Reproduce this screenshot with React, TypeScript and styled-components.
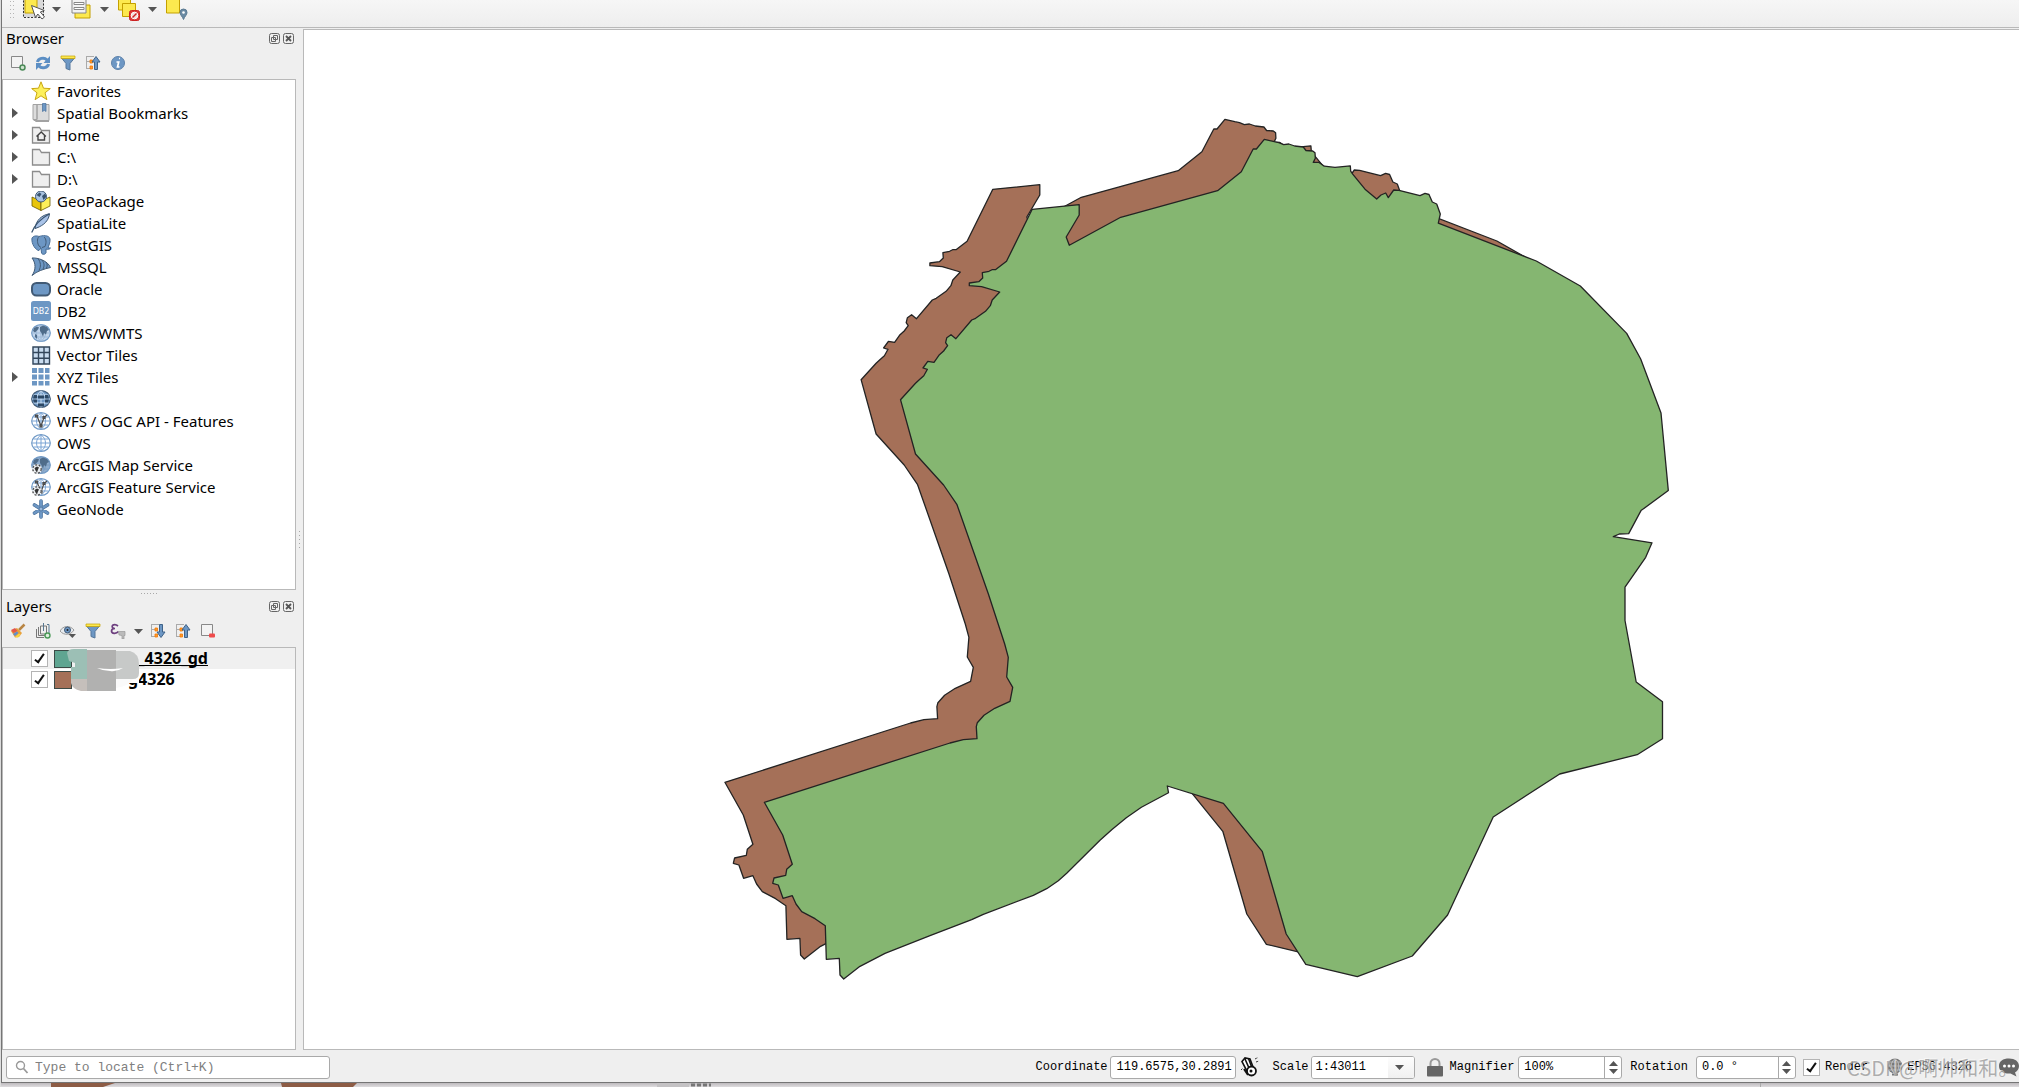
import React from "react";
import styled, { createGlobalStyle, css } from "styled-components";

const UI = `"Noto Sans", "Open Sans", sans-serif`;
const MONO = `"Liberation Mono", "Noto Sans CJK SC", monospace`;
const LINE = "#b9b9b9";
const STEEL = "#6d97c4";
const NAVY = "#415a75";

const Global = createGlobalStyle`
  *, *::before, *::after { box-sizing: border-box; }
  body { margin: 0; background: #dcdcdc; overflow: hidden; }
  ul { list-style: none; margin: 0; padding: 0; }
  svg { display: block; flex: none; }
`;

const Desktop = styled.div`
  display: flex;
  flex-direction: column;
  height: 100vh;
  padding-left: 1px;
  font-family: ${UI};
  font-size: 15px;
  color: #000;
`;

const Window = styled.div`
  flex: 1;
  min-height: 0;
  display: flex;
  flex-direction: column;
  background: #efefef;
  border-left: 1px solid #757575;
  border-bottom: 1px solid #757575;
`;

const IconButton = styled.button`
  display: flex;
  align-items: center;
  justify-content: center;
  padding: 0;
  border: 0;
  background: none;
`;

const ToolBar = styled.header`
  display: flex;
  align-items: flex-end;
  height: 28px;
  padding: 0 0 6px 6px;
  overflow: hidden;
  background: linear-gradient(#f6f6f6, #eeeeee);
  border-bottom: 1px solid ${LINE};
`;

const ToolButton = styled(IconButton)<{ $w: number }>`
  width: ${(p) => p.$w}px;
  height: 24px;
  flex: none;
`;

const Body = styled.div`
  flex: 1;
  min-height: 0;
  display: flex;
`;

const DockColumn = styled.aside`
  width: 294px;
  flex: none;
  display: flex;
  flex-direction: column;
`;

const Dock = styled.section<{ $share: number }>`
  flex: ${(p) => p.$share} 1 0;
  min-height: 0;
  display: flex;
  flex-direction: column;
`;

const DockTitle = styled.div`
  display: flex;
  align-items: center;
  gap: 3px;
  height: 23px;
  flex: none;
  padding: 0 2px 2px 4px;

  h2 {
    flex: 1;
    margin: 0;
    font-size: 15px;
    font-weight: 400;
    line-height: 23px;
  }
`;

const DockTools = styled.div`
  display: flex;
  align-items: center;
  gap: 9px;
  height: 24px;
  flex: none;
  margin-bottom: 4px;
  padding-left: 8px;
`;

const DockTool = styled(IconButton)<{ $narrow?: boolean }>`
  width: ${(p) => (p.$narrow ? 6 : 16)}px;
  height: 16px;
`;

const ListBox = styled.div`
  position: relative;
  flex: 1;
  min-height: 0;
  background: #fff;
  border: 1px solid ${LINE};
  overflow: hidden;
`;

const Splitter = styled.div<{ $upright?: boolean }>`
  flex: none;
  display: flex;
  align-items: center;
  justify-content: center;
  ${(p) => (p.$upright ? css`width: 7px;` : css`height: 6px;`)}

  &::after {
    content: "";
    ${(p) =>
      p.$upright
        ? css`width: 1px; height: 17px; background: repeating-linear-gradient(#a8a8a8 0 1px, transparent 1px 4px);`
        : css`width: 17px; height: 1px; background: repeating-linear-gradient(90deg, #a8a8a8 0 1px, transparent 1px 3px);`}
  }
`;

const TreeRow = styled.li`
  display: flex;
  align-items: center;
  height: 22px;
  padding-left: 8px;
  line-height: 22px;
  white-space: nowrap;
`;

const Expander = styled(IconButton)`
  width: 8px;
  height: 16px;
  margin-right: 12px;
`;

const TreeText = styled.span`
  margin-left: 6px;
`;

const LayerRow = styled.li<{ $current?: boolean }>`
  display: flex;
  align-items: center;
  gap: 6px;
  height: 21px;
  padding-left: 28px;
  background: ${(p) => (p.$current ? "#f0f0f0" : "#fff")};
`;

const Check = styled.input`
  appearance: none;
  display: block;
  position: relative;
  flex: none;
  width: 17px;
  height: 17px;
  margin: 0;
  background: #fff;
  border: 1px solid #b4b4b4;

  &:checked::after {
    content: "";
    position: absolute;
    left: 5px;
    top: 1px;
    width: 5px;
    height: 11px;
    border: solid #111;
    border-width: 0 2px 2px 0;
    transform: rotate(35deg);
  }
`;

const Swatch = styled.span<{ $color: string }>`
  width: 18px;
  height: 18px;
  flex: none;
  background: ${(p) => p.$color};
  border: 1px solid #3c4a46;
`;

const LayerName = styled.label<{ $skip: number; $current?: boolean }>`
  margin-left: ${(p) => p.$skip}px;
  font-size: 16px;
  font-weight: 700;
  line-height: 21px;
  text-decoration: ${(p) => (p.$current ? "underline" : "none")};
  text-decoration-thickness: 1px;
  text-decoration-skip-ink: none;
`;

const Smudge = styled.svg`
  position: absolute;
  left: 63px;
  top: 1px;
`;

const MapCanvas = styled.main`
  flex: 1;
  min-width: 0;
  margin-top: 1px;
  background: #fff;
  border: solid ${LINE};
  border-width: 1px 0 1px 1px;
  overflow: hidden;
`;

const StatusBar = styled.footer`
  position: relative;
  display: flex;
  align-items: center;
  height: 32px;
  flex: none;
  padding: 2px 0 0 4px;
  font-family: ${MONO};
  font-size: 12px;
`;

const field = css`
  height: 23px;
  background: #fff;
  border: 1px solid #a9a9a9;
  border-radius: 3px;
`;

const Locator = styled.label`
  ${field}
  display: flex;
  align-items: center;
  gap: 6px;
  width: 324px;
  padding-left: 8px;
  margin-right: auto;

  input {
    flex: 1;
    min-width: 0;
    padding: 0;
    border: 0;
    outline: 0;
    background: none;
    font: 13px ${MONO};
  }
  input::placeholder { color: #808080; opacity: 1; }
`;

const Label = styled.label<{ $before?: number; $after?: number }>`
  margin-left: ${(p) => p.$before ?? 0}px;
  margin-right: ${(p) => p.$after ?? 4}px;
  white-space: nowrap;
`;

const TextBox = styled.input`
  ${field}
  width: 126px;
  padding: 0 0 0 6px;
  font: 12px ${MONO};
`;

const Combo = styled.span`
  ${field}
  position: relative;
  display: flex;
  width: 104px;
  overflow: hidden;

  select {
    appearance: none;
    width: 100%;
    padding: 0 0 0 4px;
    border: 0;
    background: linear-gradient(#fdfdfd, #f0f0f0) right / 26px 100% no-repeat #fff;
    font: 12px ${MONO};
    color: #000;
  }
  svg { position: absolute; right: 10px; top: 8px; pointer-events: none; }
`;

const Spin = styled.span<{ $w: number }>`
  ${field}
  display: flex;
  width: ${(p) => p.$w}px;

  input {
    flex: 1;
    min-width: 0;
    padding: 0 0 0 5px;
    border: 0;
    background: none;
    font: 12px ${MONO};
  }
`;

const SpinKeys = styled.span`
  display: flex;
  flex-direction: column;
  justify-content: center;
  align-items: center;
  gap: 3px;
  width: 17px;
  border-left: 1px solid #a9a9a9;
`;

const StatusButton = styled(IconButton)<{ $before: number; $after: number }>`
  gap: 4px;
  margin-left: ${(p) => p.$before}px;
  margin-right: ${(p) => p.$after}px;
  font: 12px ${MONO};
  color: #000;
`;

const Watermark = styled.span`
  position: absolute;
  right: 0;
  top: 4px;
  width: 172px;
  font: 20px/28px "Noto Sans CJK SC", sans-serif;
  color: rgba(150, 150, 150, 0.75);
  text-shadow: -1px -1px 0 rgba(255, 255, 255, 0.6);
  white-space: nowrap;
  pointer-events: none;
`;

const Beneath = styled.div`
  height: 4px;
  flex: none;
  background: linear-gradient(#bdbabd, #dedcde);
`;

/* ---------- icons ---------- */

const Svg = ({ w, h = w, children }: { w: number; h?: number; children: React.ReactNode }) => (
  <svg width={w} height={h} viewBox={`0 0 ${w} ${h}`} fill="none" aria-hidden="true">
    {children}
  </svg>
);

const Down = () => (
  <svg width={9} height={5} viewBox="0 0 9 5" aria-hidden="true"><path d="M0 0h9L4.500 5z" fill="#555" /></svg>
);
const Up = () => (
  <svg width={9} height={5} viewBox="0 0 9 5" aria-hidden="true"><path d="M0 5h9L4.500 0z" fill="#555" /></svg>
);

const Grip = () => (
  <Svg w={8} h={24}>
    <path d="M2.500 0v21M5.500 0v21" stroke="#b5b5b5" strokeDasharray="1 3" />
  </Svg>
);

const SelectIcon = () => (
  <Svg w={24}>
    <rect x="1" y="0" width="21" height="20" fill="#d9d9d9" />
    <path d="M1.500 0v20.500h20V0" stroke="#333" strokeDasharray="2 1.500" />
    <path d="M3 0h12v16H3z" fill="#fce94f" stroke="#c4a000" />
    <path d="M9.500 8.500l4 12 2.300-3.500 4.200 5 2.500-2-4.200-5 4-1.500z" fill="#fff" stroke="#555" />
  </Svg>
);
const FormIcon = () => (
  <Svg w={24}>
    <path d="M6 8h15v13H6z" fill="#fce94f" stroke="#c4a000" />
    <path d="M3 0h14v16H3z" fill="#f2f2f2" stroke="#888" />
    <path d="M5 5.500h10v2H5zM5 10.500h10v2H5z" fill="#fff" stroke="#888" />
  </Svg>
);
const DeselectIcon = () => (
  <Svg w={24}>
    <path d="M1.500 0h12v13h-12z" fill="#fce94f" stroke="#c4a000" />
    <path d="M5.500 6.500h13v13h-13z" fill="#fce94f" stroke="#c4a000" />
    <rect x="12.500" y="13.500" width="10" height="10" rx="2" fill="#dd3a3a" stroke="#c22" />
    <circle cx="17.500" cy="18.500" r="3.300" fill="#f2dede" stroke="#fff" />
    <path d="M15.500 20.500l4-4" stroke="#c22" strokeWidth="1.500" />
  </Svg>
);
const PinSelectIcon = () => (
  <Svg w={24}>
    <path d="M1.500 0h13v16h-13z" fill="#fce94f" stroke="#c4a000" />
    <path d="M18.500 22.500c-1-3-3.500-4.500-3.500-7a3.500 3.500 0 017 0c0 2.500-2.500 4-3.500 7z" fill="#6b8ba4" stroke="#587891" />
    <circle cx="18.500" cy="15.500" r="1.300" fill="#fff" />
  </Svg>
);

const FloatIcon = () => (
  <Svg w={11}>
    <rect x=".5" y=".5" width="10" height="10" rx="2" stroke="#666" />
    <path d="M4.500 2.500h4v4h-4zM2.500 4.500h4v4h-4z" stroke="#666" />
  </Svg>
);
const CloseIcon = () => (
  <Svg w={11}>
    <rect x=".5" y=".5" width="10" height="10" rx="2" stroke="#666" />
    <path d="M3 3l5 5M8 3L3 8" stroke="#555" strokeWidth="1.800" />
  </Svg>
);

const AddIcon = () => (
  <Svg w={16}>
    <path d="M1.500 1.500h11v11h-11z" stroke="#888" fill="#f3f3f3" />
    <circle cx="12.500" cy="12.500" r="2.500" fill="#cfe3cf" stroke="#4b8a58" strokeWidth="1.500" />
  </Svg>
);
const RefreshIcon = () => (
  <Svg w={16}>
    <path d="M2.500 7C3 3.500 9 1.500 12 5M13.500 9C13 12.500 7 14.500 4 11" stroke="#5b8ec4" strokeWidth="3" />
    <path d="M15 1v7H8.500zM1 15V8h6.500z" fill="#5b8ec4" />
  </Svg>
);
const FilterIcon = () => (
  <Svg w={16}>
    <path d="M1.500 3h13L10 8.500V15l-4-1.500v-5z" fill={STEEL} stroke="#55779b" />
    <path d="M1 1h14v2.500H1z" fill="#fce94f" stroke="#c4a000" strokeWidth=".7" />
  </Svg>
);
const LevelIcon = ({ down }: { down?: boolean }) => (
  <Svg w={16}>
    <path d="M1 1.500h8M1.500 1v13M1.500 6.500h4M1.500 13.500h4" stroke="#aaa" />
    <path d="M5 5h2.500v3H5zM5 11h2.500v3H5z" fill="#ff9a2e" stroke="#f57900" strokeWidth=".8" />
    <path
      d={down ? "M9.500 1.500h3V9H15L11 14.500 7 9H9.500z" : "M9.500 14.500h3V7H15L11 1.500 7 7H9.500z"}
      fill={STEEL}
      stroke="#3f6288"
    />
  </Svg>
);
const InfoIcon = () => (
  <Svg w={16}>
    <circle cx="8" cy="8" r="6.500" fill={STEEL} stroke="#5d82ab" />
    <path d="M9 3.500h1M6.500 7h2.200l-1.200 5h2" stroke="#fff" strokeWidth="1.700" />
  </Svg>
);
const BrushIcon = () => (
  <Svg w={16}>
    <path d="M14.500 1.500L9 7" stroke="#b98644" strokeWidth="2.500" />
    <path d="M1 8l6-3 5 5-3 4-4 .5z" fill="#e9a13b" />
    <path d="M1 7l4-2 2.500 3-4 2z" fill="#e2574c" />
    <path d="M3 11l4-2.500 1.500 1.500L5 13z" fill="#5d8ed0" />
    <path d="M5 14l4-3.500 1.500 1-2.500 3z" fill="#f6d743" />
  </Svg>
);
const GroupIcon = () => (
  <Svg w={16}>
    <path d="M1.500 6v8.500H9M3.500 4v8.500H11M5.500 3h6v8h-6z" stroke="#777" fill="#eee" />
    <path d="M8.500 0v8M12 1.500h2v9" stroke="#587891" />
    <circle cx="12.500" cy="12.500" r="2.500" fill="#dff0df" stroke="#4b9a58" strokeWidth="1.400" />
  </Svg>
);
const EyeIcon = () => (
  <Svg w={16}>
    <path d="M0 8c3-5.500 10-6 14-1-3 5-10 6-14 1z" fill="#e6eaee" stroke="#999" />
    <circle cx="7.500" cy="7" r="3" fill={STEEL} stroke={NAVY} />
    <circle cx="7.500" cy="7" r="1" fill="#222" />
    <path d="M8.500 11h7.500l-3.700 4z" fill="#555" />
  </Svg>
);
const ExpressionIcon = () => (
  <Svg w={16}>
    <path d="M8 3C5 .5 1 2 2.500 4.500 3 5.500 5 5.500 5 5.500S1.500 5.500 1.500 8c0 3 5 3 7 .5" stroke="#6d3f7f" strokeWidth="1.700" />
    <path d="M8.500 8.500h6.500v4h-1V16h-2v-3.500L9 12z" fill="#bbb" stroke="#999" strokeWidth=".7" />
  </Svg>
);
const RemoveIcon = () => (
  <Svg w={16}>
    <path d="M1.500 1.500h11v11h-11z" stroke="#888" fill="#f3f3f3" />
    <rect x="9" y="10.500" width="6" height="4" rx="1" fill="#ef4b4b" />
  </Svg>
);

/* Tree icons share a 20px box */
const Globe = ({ face = "#fff", line = "#7ba4d4", rim = STEEL, children }: any) => (
  <>
    <ellipse cx="10" cy="10" rx="9.300" ry="8.400" fill={face} stroke={rim} strokeWidth="1.200" />
    <path d="M10 2v16M1 10h18M2.500 6h15M2.500 14h15M10 1.800c-6 4-6 12.500 0 16.500M10 1.800c6 4 6 12.500 0 16.500" stroke={line} />
    {children}
  </>
);
const Continents = () => (
  <path
    d="M3 5l3-1.500 2 1L6.500 7 4 9.500 2 8zM9 4l3-1.500 4 1.500 2 3-2 1-1 3.500-2-1.500-1 4-1.500-4L9 8zM4 11l2 1v4L4 14z"
    fill="#4f6c8a"
  />
);
const Nodes = () => (
  <g stroke="#4a4a4a" strokeWidth="1.200">
    <path d="M6 5l4 10 3-8.500M13 6.500l3-2.500" />
    <path d="M4.500 4h2v2h-2zM9 14h2v2H9zM12 5.500h2v2h-2z" fill="#666" />
  </g>
);
const Badge = () => (
  <g>
    <circle cx="6" cy="14" r="4.800" fill="#fff" />
    <circle cx="6" cy="14" r="4.200" fill="#eceff2" stroke="#444" strokeDasharray="2 1.500" strokeWidth="1.200" />
    <path d="M3.500 13l2.500-1.500 2 1-1 2-1 3-1.500-2z" fill="#333" />
  </g>
);
const Folder = () => <path d="M1.500 2.500h7l2 3h8v12.500h-17z" fill="#efefef" stroke="#8c8c8c" strokeWidth="1.300" />;

const TREE_ART: Record<string, React.ReactNode> = {
  star: <path d="M10 .8l2.500 6.400 6.800.4-5.300 4.200 1.900 6.900L10 14.800l-5.900 3.900L6 11.800.7 7.600l6.800-.4z" fill="#fdf05a" stroke="#c9a611" />,
  book: (
    <>
      <path d="M2 1.500h4v15H2zM6 1.500h12v16H4l2-1z" fill="#dcdcdc" stroke="#a2a2a2" />
      <path d="M2 16.500l3 2h13" stroke="#a2a2a2" />
      <path d="M11.500.5h3.500v8l-1.700-1.200-1.800 1.200z" fill={STEEL} stroke="#466f9b" strokeWidth=".7" />
    </>
  ),
  home: (
    <>
      <Folder />
      <path d="M5.500 11.500l4.700-4.500 4.700 4.500M7 10.500V15h6.500v-4.500" stroke="#444" strokeWidth="1.400" />
    </>
  ),
  folder: <Folder />,
  package: (
    <>
      <path d="M1 6l9 4v9.500L1 15z" fill="#e8c50c" stroke="#6b5a00" strokeWidth=".8" />
      <path d="M19 6l-9 4v9.500l9-4.500z" fill="#fdf05a" stroke="#6b5a00" strokeWidth=".8" />
      <circle cx="10" cy="5.500" r="5.500" fill="#a9c3e0" stroke={NAVY} />
      <path d="M5.500 4l3-2.500 2 1.500-2 3zM11 5l3-2.500 1.500 3-3 3.500z" fill="#38536f" />
    </>
  ),
  feather: (
    <>
      <path d="M18.500.8C11 2 5 7 4 15.500 9 14 17.500 10 18.500.8z" fill="#a9c3e8" stroke="#38536f" />
      <path d="M18.500.8C11 5 4 11 .7 19.500" stroke="#38536f" strokeWidth="1.200" />
    </>
  ),
  elephant: (
    <>
      <path d="M1 3c2-3 6-2 7-1.500C11 .5 18-.5 19 4c.5 3-1.500 7-2 9h2.500c-1 1.500-3 1.500-4.500 1V18c-1.500 2-4 1.500-4.500 0l-.5-5-2 2.500C5 15.500 0 9 1 3z" fill={STEEL} stroke="#466b94" />
      <path d="M8 1.500C5.500 4 6.500 9 8 11l2 1.500M13 2c2.500 2 2.500 6 1 9.500l-3 1" stroke={NAVY} />
    </>
  ),
  fin: (
    <>
      <path d="M1 1c6-.5 16 3 18.500 9.500C13 12 6 14 1 18.500 5 13 5 6 1 1z" fill={STEEL} stroke={NAVY} />
      <path d="M7 1.500c3 4 3 8 1 12M11 3c2.500 3.500 2.500 6 1 9M15 5c1.500 2 1.500 4 .5 6" stroke={NAVY} />
    </>
  ),
  oracle: <rect x="1" y="4" width="18" height="12.500" rx="4.500" fill={STEEL} stroke="#415a75" strokeWidth="2" />,
  db2: <rect width="20" height="20" rx="2.500" fill={STEEL} />,
  wms: <Globe face="#c3d6ec" line="#9db9d8"><Continents /></Globe>,
  grid: (
    <>
      <path d="M1.500 2h17v17h-17z" fill="#c9dcf0" />
      <path d="M2 2h16.500v17H2zM2 7.500h16.500M2 13.300h16.500M7.500 2v17M13 2v17" stroke="#33475c" strokeWidth="1.400" />
    </>
  ),
  dots: (
    <path
      d="M1 1h5v5H1zM7.500 1h5v5h-5zM14 1h4.500v5H14zM1 7.500h5v5H1zM7.500 7.500h5v5h-5zM14 7.500h4.500v5H14zM1 14h5v4.500H1zM7.500 14h5v4.500h-5zM14 14h4.500v4.500H14z"
      fill={STEEL}
    />
  ),
  wcs: (
    <Globe face={STEEL} line="#c9dcf0" rim={NAVY}>
      <path d="M7 6.500h6v3H7zM2 10.500h4v3H3zM14 10.500h4l-1 3h-3zM7 14.500h6v3H7zM3 6h3v3.500H2zM14 6h3l1 3.500h-4z" fill="#2c4763" />
    </Globe>
  ),
  wfs: <Globe><Nodes /></Globe>,
  ows: <Globe />,
  agsMap: <Globe face="#8fadce" line="#7b9cc0"><Continents /><Badge /></Globe>,
  agsFeature: <Globe><Nodes /><Badge /></Globe>,
  geonode: (
    <>
      <path d="M10 2v16M3.500 6l13 8M16.500 6l-13 8" stroke="#466b94" strokeWidth="3.600" strokeLinecap="round" />
      <path d="M10 2v16M3.500 6l13 8M16.500 6l-13 8" stroke={STEEL} strokeWidth="2.600" strokeLinecap="round" />
      <circle cx="10" cy="10" r="2" fill="#9dbbdc" stroke="#466b94" strokeWidth=".8" />
    </>
  ),
};

const TreeIcon = ({ name }: { name: string }) => (
  <Svg w={20}>
    {TREE_ART[name]}
    {name === "db2" && (
      <text x="10" y="12.500" textAnchor="middle" fontFamily="DejaVu Sans, sans-serif" fontSize="8" fill="#fff">DB2</text>
    )}
  </Svg>
);

const MouseIcon = () => (
  <Svg w={20}>
    <path d="M15 2l3-1.500M16 5l3-1M1 13l2-2" stroke="#333" strokeDasharray="2 1" />
    <path d="M2 4.500L5 1l5 1 3 8-6 4z" fill="#fff" stroke="#111" strokeWidth="1.600" />
    <path d="M5 2l4 9M8.500 1.500l3 8" stroke="#111" strokeWidth="1.600" />
    <circle cx="11.500" cy="14" r="4.500" fill="#fff" stroke="#111" strokeWidth="1.800" />
    <circle cx="11" cy="14" r="1.500" fill="#111" />
    <path d="M4 12l4 6" stroke="#111" strokeWidth="2" />
  </Svg>
);
const LockIcon = () => (
  <Svg w={16} h={20}>
    <path d="M3.500 10V6.500a4.500 4.500 0 019 0V10" stroke="#999" strokeWidth="2" />
    <rect x="0" y="9" width="16" height="10.500" rx="1" fill="#666" />
  </Svg>
);
const CrsIcon = () => (
  <Svg w={16} h={18}>
    <circle cx="8" cy="8" r="7.500" fill="#777" />
    <path d="M8 0v16M.5 8h15M2 4h12M2 12h12M8 .5c-5 4-5 11 0 15M8 .5c5 4 5 11 0 15" stroke="#ccc" strokeWidth=".8" />
    <path d="M5 16.500h6" stroke="#777" strokeWidth="2" />
  </Svg>
);
const ChatIcon = () => (
  <Svg w={20}>
    <path d="M10 1.500c6 0 10 3 10 7.500 0 3-1.500 5-4 6.500l1.500 4-6-3C4.500 17 0 14 0 9s4-7.500 10-7.500z" fill="#666" />
    <circle cx="5.500" cy="9" r="1.500" fill="#fff" /><circle cx="10" cy="9" r="1.500" fill="#fff" /><circle cx="14.500" cy="9" r="1.500" fill="#fff" />
  </Svg>
);
const LensIcon = () => (
  <Svg w={14}>
    <circle cx="5.500" cy="5.500" r="4" stroke="#999" strokeWidth="1.400" />
    <path d="M8.500 8.500l4 4.500" stroke="#999" strokeWidth="1.800" />
  </Svg>
);

/* ---------- map ---------- */

const PARCEL =
  "900.5,399.7 915.5,454 943.6,485 957,504.7 988.3,593.7 1004.7,644 1008.3,657.3 1006.7,677 1012.7,687.3 1010,701.3 994.7,708.3 984,715.3 977.3,722.7 976.3,726.7 977,738.7 963.3,739.7 950,743 764.3,802.3 782.7,835 792.3,864.3 786.7,869.3 785.7,875.3 774,878 772.7,883.3 778.3,885 783,898.3 792.3,895.7 796,904 801.7,911.7 815,918.7 825.3,925.7 826.3,959.3 839.3,958.3 840,975 843.7,979 860,966.3 885,953.3 930,935.7 971.7,919.7 983.3,914.3 1033.3,895.3 1046.7,888.7 1058.3,880.7 1066.7,873.3 1100,840.3 1112,829.5 1126.3,817.7 1141.4,807.3 1168.5,792.7 1167.3,786 1223.4,803.3 1262.2,851.3 1286.2,934 1305.8,964.3 1357.3,976.7 1412.3,956 1447.6,915 1493.2,817 1559.7,774 1637.2,754.7 1662.5,738.7 1662.5,701.7 1636.2,682 1625,620.5 1625,587.2 1645.7,557.3 1652,542.8 1613.3,536.7 1619.3,534 1628.7,533.6 1641,510.6 1668.3,490.4 1661,413 1640.7,359 1626.7,333.4 1580.3,286 1536.3,261 1438.3,223.2 1440.3,214 1436.7,204 1432.3,202 1429,194.5 1425,193.4 1420,195.7 1399,190.3 1393.7,190 1388.3,197.6 1385.7,193 1381,195 1376.7,199 1365,189.2 1352.7,174.2 1350.7,171.2 1350.3,165.8 1335,167.4 1324.3,166.2 1319,162.4 1313.3,162.4 1315.3,158.2 1315,152.8 1312.7,151 1306,150.5 1303.3,147 1294.7,146 1288.8,144 1283.7,144.7 1278.9,142.7 1274.2,141.7 1264.3,139.3 1256.4,149 1253.2,149 1241.3,171.7 1217.6,190.7 1120.7,217.3 1069.3,245.3 1066.2,237 1079.2,215 1079.2,204.7 1032.2,209.3 1006.5,261.3 995.4,269.7 992,269.7 989,271.3 982.3,272.7 982.7,278 978.8,281.7 969.3,283 969.3,285.7 981.6,286.7 999.7,292 992.2,300 990.3,305.7 985.5,311.3 975.6,318.3 971.7,320 955.9,338.7 951,334.7 946.8,337.7 945.6,342.7 947.6,345.7 943.6,351 938.9,355.3 934,362.3 927.8,361.3 923,368 927.4,369.3 923.8,375.7 919,380 915.5,383.3";

const Parcels = () => (
  <svg width="100%" height="100%" viewBox="304 30 1715 1019" preserveAspectRatio="xMidYMid meet" role="img" aria-label="Map layers">
    <g stroke="#232323" strokeWidth="1.300" strokeLinejoin="round">
      <polygon points={PARCEL} fill="#a57058" transform="translate(-39.400 -20)" />
      <polygon points={PARCEL} fill="#85b671" />
    </g>
  </svg>
);

/* ---------- data ---------- */

const BROWSER: { icon: string; text: string; open?: boolean }[] = [
  { icon: "star", text: "Favorites" },
  { icon: "book", text: "Spatial Bookmarks", open: true },
  { icon: "home", text: "Home", open: true },
  { icon: "folder", text: "C:\\", open: true },
  { icon: "folder", text: "D:\\", open: true },
  { icon: "package", text: "GeoPackage" },
  { icon: "feather", text: "SpatiaLite" },
  { icon: "elephant", text: "PostGIS" },
  { icon: "fin", text: "MSSQL" },
  { icon: "oracle", text: "Oracle" },
  { icon: "db2", text: "DB2" },
  { icon: "wms", text: "WMS/WMTS" },
  { icon: "grid", text: "Vector Tiles" },
  { icon: "dots", text: "XYZ Tiles", open: true },
  { icon: "wcs", text: "WCS" },
  { icon: "wfs", text: "WFS / OGC API - Features" },
  { icon: "ows", text: "OWS" },
  { icon: "agsMap", text: "ArcGIS Map Service" },
  { icon: "agsFeature", text: "ArcGIS Feature Service" },
  { icon: "geonode", text: "GeoNode" },
];

const ExpandArrow = () => (
  <Svg w={6} h={10}><path d="M0 0v10l6-5z" fill="#555" /></Svg>
);

const Title = ({ text }: { text: string }) => (
  <DockTitle>
    <h2>{text}</h2>
    <IconButton aria-label={`Float ${text}`}><FloatIcon /></IconButton>
    <IconButton aria-label={`Close ${text}`}><CloseIcon /></IconButton>
  </DockTitle>
);

export default function App() {
  return (
    <Desktop>
      <Global />
      <Window>
        <ToolBar>
          <Grip />
          <ToolButton $w={36} aria-label="Select features"><SelectIcon /></ToolButton>
          <ToolButton $w={9} aria-label="Select options"><Down /></ToolButton>
          <ToolButton $w={39} aria-label="Select by value"><FormIcon /></ToolButton>
          <ToolButton $w={9} aria-label="Value options"><Down /></ToolButton>
          <ToolButton $w={39} aria-label="Deselect"><DeselectIcon /></ToolButton>
          <ToolButton $w={9} aria-label="Deselect options"><Down /></ToolButton>
          <ToolButton $w={39} aria-label="Select by location"><PinSelectIcon /></ToolButton>
        </ToolBar>
        <Body>
          <DockColumn>
            <Dock $share={562}>
              <Title text="Browser" />
              <DockTools>
                <DockTool aria-label="Add selected layers"><AddIcon /></DockTool>
                <DockTool aria-label="Refresh"><RefreshIcon /></DockTool>
                <DockTool aria-label="Filter browser"><FilterIcon /></DockTool>
                <DockTool aria-label="Collapse all"><LevelIcon /></DockTool>
                <DockTool aria-label="Properties"><InfoIcon /></DockTool>
              </DockTools>
              <ListBox>
                <ul>
                  {BROWSER.map((row) => (
                    <TreeRow key={row.text}>
                      <Expander as={row.open ? "button" : "span"} aria-label={row.open ? `Expand ${row.text}` : undefined}>
                        {row.open && <ExpandArrow />}
                      </Expander>
                      <TreeIcon name={row.icon} />
                      <TreeText>{row.text}</TreeText>
                    </TreeRow>
                  ))}
                </ul>
              </ListBox>
            </Dock>
            <Splitter />
            <Dock $share={454}>
              <Title text="Layers" />
              <DockTools>
                <DockTool aria-label="Layer styling"><BrushIcon /></DockTool>
                <DockTool aria-label="Add group"><GroupIcon /></DockTool>
                <DockTool aria-label="Map themes"><EyeIcon /></DockTool>
                <DockTool aria-label="Filter legend"><FilterIcon /></DockTool>
                <DockTool aria-label="Filter by expression"><ExpressionIcon /></DockTool>
                <DockTool $narrow aria-label="Expression options"><Down /></DockTool>
                <DockTool aria-label="Expand all"><LevelIcon down /></DockTool>
                <DockTool aria-label="Collapse all layers"><LevelIcon /></DockTool>
                <DockTool aria-label="Remove layer"><RemoveIcon /></DockTool>
              </DockTools>
              <ListBox>
                <ul>
                  <LayerRow $current>
                    <Check id="layer-gd" type="checkbox" defaultChecked />
                    <Swatch $color="#5fa591" />
                    <LayerName htmlFor="layer-gd" $skip={60} $current>_4326_gd</LayerName>
                  </LayerRow>
                  <LayerRow>
                    <Check id="layer-base" type="checkbox" defaultChecked />
                    <Swatch $color="#a57058" />
                    <LayerName htmlFor="layer-base" $skip={50}>g4326</LayerName>
                  </LayerRow>
                </ul>
                <Smudge width="76" height="43" viewBox="0 0 76 43" aria-hidden="true">
                  <path d="M50 26h23v8H50z" fill="#fff" />
                  <path d="M1 4Q2 0 8 0h13v30H5V18H9V14L3 12z" fill="#9cbfb5" />
                  <path d="M5 30h16v12h-6Q6 40 5 34z" fill="#c5bfbb" />
                  <path d="M21 1h29v41H21z" fill="#b1b1b0" />
                  <path d="M50 2h14q9 2 9 14v8q0 6-6 6H50z" fill="#c7c9c8" />
                  <path d="M50 30h17q-4 7-17 9z" fill="#fafafa" />
                  <path d="M31 19q14 2 26 0-6 4-13 3-7 0-13-3z" fill="#fff" />
                </Smudge>
              </ListBox>
            </Dock>
          </DockColumn>
          <Splitter $upright />
          <MapCanvas><Parcels /></MapCanvas>
        </Body>
        <StatusBar>
          <Locator>
            <LensIcon />
            <input aria-label="Locate" placeholder="Type to locate (Ctrl+K)" />
          </Locator>
          <Label htmlFor="coord" $after={2}>Coordinate</Label>
          <TextBox id="coord" defaultValue="119.6575,30.2891" />
          <StatusButton $before={4} $after={0} aria-label="Toggle extents"><MouseIcon /></StatusButton>
          <Label htmlFor="scale" $before={13} $after={2}>Scale</Label>
          <Combo>
            <select id="scale" defaultValue="1:43011"><option>1:43011</option></select>
            <Down />
          </Combo>
          <StatusButton $before={12} $after={7} aria-label="Lock scale"><LockIcon /></StatusButton>
          <Label htmlFor="magnifier">Magnifier</Label>
          <Spin $w={104}>
            <input id="magnifier" defaultValue="100%" />
            <SpinKeys><Up /><Down /></SpinKeys>
          </Spin>
          <Label htmlFor="rotation" $before={8} $after={8}>Rotation</Label>
          <Spin $w={100}>
            <input id="rotation" defaultValue="0.0 °" />
            <SpinKeys><Up /><Down /></SpinKeys>
          </Spin>
          <Label $before={7} $after={5} as="span"><Check id="render" type="checkbox" defaultChecked /></Label>
          <Label htmlFor="render" $after={19}>Render</Label>
          <StatusButton $before={0} $after={27}><CrsIcon />EPSG:4326</StatusButton>
          <StatusButton $before={0} $after={0} aria-label="Messages"><ChatIcon /></StatusButton>
          <Watermark>CSDN@啊帅和和。</Watermark>
        </StatusBar>
      </Window>
      <Beneath>
        <svg width="100%" height="4" aria-hidden="true">
          <path d="M50 0h64l-12 4H50zM280 0h76l-4 4h-71z" fill="#8d5c45" />
          <path d="M656 0h32v4h-32z" fill="#c4c2c4" />
          <path d="M690 2h20" stroke="#777" strokeWidth="3" strokeDasharray="4 2" />
          <path d="M1759.500 0v4" stroke="#aaa" />
        </svg>
      </Beneath>
    </Desktop>
  );
}
